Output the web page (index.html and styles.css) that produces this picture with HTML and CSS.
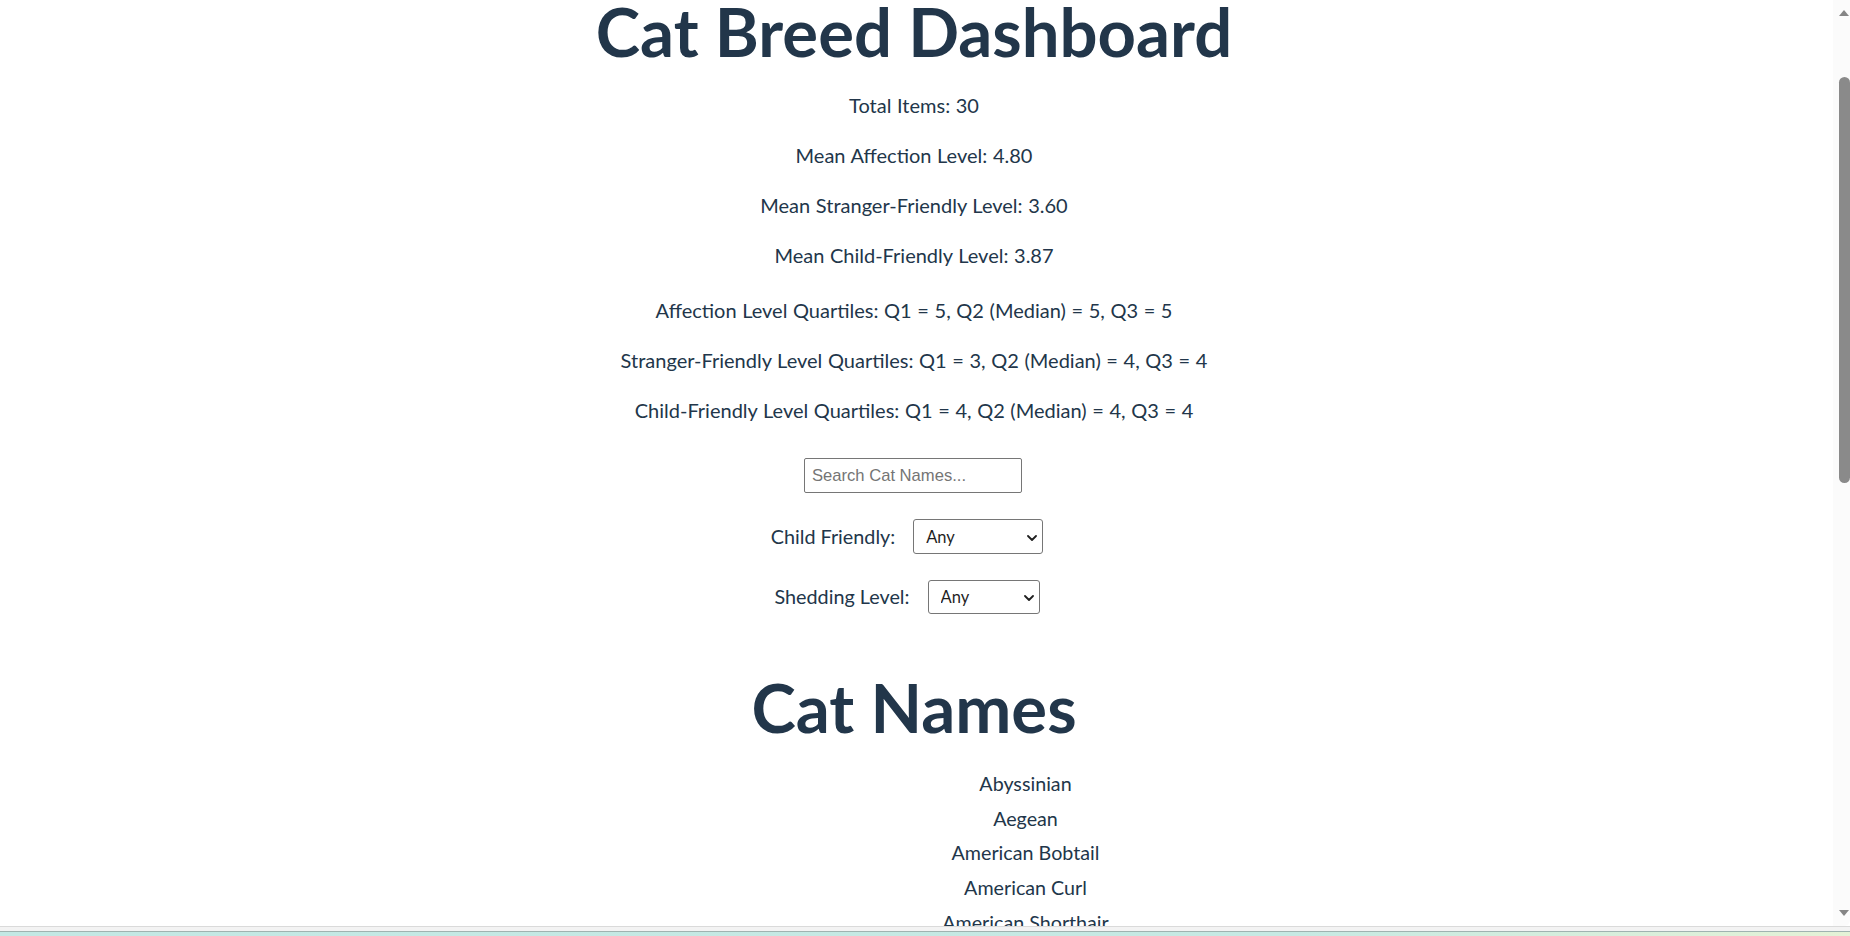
FILE: index.html
```html
<!DOCTYPE html>
<html lang="en">
<head>
<meta charset="utf-8">
<title>Cat Breed Dashboard</title>
<link rel="stylesheet" href="styles.css">
</head>
<body>
<div class="window">
  <div class="viewport">
    <main class="page">
      <h1 class="title">Cat Breed Dashboard</h1>
      <section class="stats">
        <p>Total Items: 30</p>
        <p>Mean Affection Level: 4.80</p>
        <p>Mean Stranger-Friendly Level: 3.60</p>
        <p>Mean Child-Friendly Level: 3.87</p>
      </section>
      <section class="stats quartiles">
        <p>Affection Level Quartiles: Q1 = 5, Q2 (Median) = 5, Q3 = 5</p>
        <p>Stranger-Friendly Level Quartiles: Q1 = 3, Q2 (Median) = 4, Q3 = 4</p>
        <p>Child-Friendly Level Quartiles: Q1 = 4, Q2 (Median) = 4, Q3 = 4</p>
      </section>
      <section class="controls">
        <input class="search" type="text" placeholder="Search Cat Names...">
        <div class="filter-row">
          <label for="child">Child Friendly:</label>
          <span class="select-wrap select-child">
            <select id="child"><option>Any</option><option>1</option><option>2</option><option>3</option><option>4</option><option>5</option></select>
            <svg class="chev" viewBox="0 0 10 6" width="10" height="6"><path d="M1 1 L5 5 L9 1" fill="none" stroke="#1f1f1f" stroke-width="1.8" stroke-linecap="round" stroke-linejoin="round"/></svg>
          </span>
        </div>
        <div class="filter-row">
          <label for="shed">Shedding Level:</label>
          <span class="select-wrap select-shed">
            <select id="shed"><option>Any</option><option>1</option><option>2</option><option>3</option><option>4</option><option>5</option></select>
            <svg class="chev" viewBox="0 0 10 6" width="10" height="6"><path d="M1 1 L5 5 L9 1" fill="none" stroke="#1f1f1f" stroke-width="1.8" stroke-linecap="round" stroke-linejoin="round"/></svg>
          </span>
        </div>
      </section>
      <h1 class="title names-title">Cat Names</h1>
      <ul class="names">
        <li>Abyssinian</li>
        <li>Aegean</li>
        <li>American Bobtail</li>
        <li>American Curl</li>
        <li>American Shorthair</li>
        <li>American Wirehair</li>
        <li>Arabian Mau</li>
      </ul>
    </main>
    <div class="scrollbar">
      <span class="arrow arrow-up"></span>
      <span class="thumb"></span>
      <span class="spacer"></span>
      <span class="arrow arrow-down"></span>
    </div>
  </div>
  <div class="taskbar">
    <span class="band-light"></span>
    <span class="band-teal"></span>
  </div>
</div>
</body>
</html>
```

FILE: styles.css
```css
* { box-sizing: border-box; }
html, body { margin: 0; padding: 0; background: #ffffff; }
body { font-family: Lato, "Open Sans", sans-serif; color: #22364a; overflow: hidden; }

.window { width: 1850px; height: 936px; display: flex; flex-direction: column; }
.viewport { height: 926px; display: flex; }
.page { flex: 1; overflow: hidden; text-align: center; padding-right: 5px; }

.title { font-size: 67px; line-height: 62px; font-weight: 700; margin: 0 0 28px; color: #22364a; }

.stats p { font-size: 20px; line-height: 30px; margin: 20px 0; word-spacing: 0.5px; }
.quartiles { margin-top: 25px; }

.controls { margin-top: 33px; display: flex; flex-direction: column; align-items: center; }
.search {
  width: 218px; height: 35px; padding: 0 7px;
  border: 1px solid #767676; border-radius: 2px;
  font-family: "Liberation Sans", Arial, sans-serif; font-size: 16.6px; color: #222;
  margin-right: 2px; outline: none;
}
.search::placeholder { color: #757575; }

.filter-row { display: flex; align-items: center; gap: 18px; margin-right: 14px; }
.filter-row:nth-child(2) { margin-top: 26px; }
.filter-row:nth-child(3) { margin-top: 26px; }
.filter-row label { font-size: 19.8px; line-height: 30px; margin-bottom: 2px; }
.select-wrap { position: relative; display: inline-flex; }
.select-wrap select {
  appearance: none; -webkit-appearance: none;
  height: 35px; padding: 0 24px 0 12px;
  border: 1px solid #767676; border-radius: 3px; background: #fff;
  font-family: Lato, sans-serif; font-size: 16.5px; color: #1f1f1f;
}
.select-child select { width: 130px; }
.select-shed select { width: 112px; height: 34px; }
.chev { position: absolute; right: 6px; top: 50%; margin-top: -2px; pointer-events: none; }

.names-title { margin: 62px 0 0; }
.names { list-style: none; margin: 29px 0 0; padding: 0 0 0 223px; }
.names li { font-size: 19.7px; line-height: 34.7px; }

.scrollbar { width: 17px; display: flex; flex-direction: column; align-items: center; background: #fbfbfb; border-bottom-right-radius: 6px; }
.arrow { width: 0; height: 0; border-left: 5px solid transparent; border-right: 5px solid transparent; margin-left: 5px; }
.arrow-up { border-bottom: 6px solid #858585; margin-top: 10px; }
.arrow-down { border-top: 6px solid #858585; margin-bottom: 10px; }
.thumb { width: 11px; height: 406px; margin-top: 61px; margin-left: 5px; background: #8a8a8a; border-radius: 6px; }
.spacer { flex: 1; }

.taskbar { height: 10px; display: flex; flex-direction: column; }
.band-light { height: 5px; background: #f3f3f3; border-top: 1px solid #dadada; }
.band-teal { flex: 1; background: linear-gradient(90deg, #c3e8e4, #c6e9e3 70%, #e4f2d6); border-top: 1px solid #9fb3b0; }
```
